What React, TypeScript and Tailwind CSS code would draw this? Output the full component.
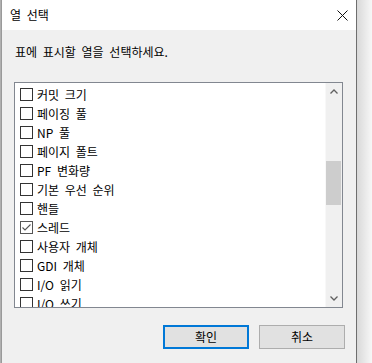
import React from "react";

const items: { label: string; checked: boolean }[] = [
  { label: "커밋 크기", checked: false },
  { label: "페이징 풀", checked: false },
  { label: "NP 풀", checked: false },
  { label: "페이지 폴트", checked: false },
  { label: "PF 변화량", checked: false },
  { label: "기본 우선 순위", checked: false },
  { label: "핸들", checked: false },
  { label: "스레드", checked: true },
  { label: "사용자 개체", checked: false },
  { label: "GDI 개체", checked: false },
  { label: "I/O 읽기", checked: false },
  { label: "I/O 쓰기", checked: false },
];

function Checkbox({ checked }: { checked: boolean }) {
  return (
    <div
      className={`w-[13px] h-[13px] shrink-0 bg-white border ${
        checked ? "border-[#555555]" : "border-[#333333]"
      } flex items-center justify-center`}
    >
      {checked && (
        <svg width="11" height="11" viewBox="0 0 11 11">
          <polyline
            points="1.5,5.5 4,8 9.5,2.5"
            fill="none"
            stroke="#555555"
            strokeWidth="1.1"
          />
        </svg>
      )}
    </div>
  );
}

export default function App() {
  const font = {
    fontFamily: '"Noto Sans CJK KR", "Noto Sans", sans-serif',
  };
  return (
    <div
      className="w-[372px] h-[363px] overflow-hidden flex bg-[#f0f0f0] text-[12px] text-black [word-spacing:3px]"
      style={font}
    >
      <div className="w-px h-full bg-[#b0b0b0]" />
      <div className="w-[356px] h-full flex flex-col border-l border-r border-l-[#9a9a9a] border-r-[#6e6e6e]">
        {/* title bar */}
        <div className="h-[30px] bg-white flex items-center justify-between pl-[8px] pr-[8px]">
          <span className="leading-[16px]">열 선택</span>
          <svg width="11" height="11" viewBox="0 0 11 11">
            <path d="M0.5 0.5 L10.5 10.5 M10.5 0.5 L0.5 10.5" stroke="#111" strokeWidth="1" />
          </svg>
        </div>
        {/* body */}
        <div className="flex-1 bg-[#f0f0f0] flex flex-col pl-[12px] pr-[11px]">
          <div className="mt-[14px] ml-px leading-[16px]">표에 표시할 열을 선택하세요.</div>
          <div className="mt-[22px] w-[329px] h-[226px] border border-[#828790] bg-white flex overflow-hidden">
            <div className="flex-1 pt-[2px] overflow-hidden">
              {items.map((it) => (
                <div key={it.label} className="h-[19px] flex items-center pl-[5px] gap-[4px]">
                  <Checkbox checked={it.checked} />
                  <span className="leading-[16px] whitespace-nowrap">{it.label}</span>
                </div>
              ))}
            </div>
            <div className="w-[17px] h-full bg-[#f0f0f0] flex flex-col border-l border-l-[#f8f8f8]">
              <div className="h-[17px] flex items-center justify-center">
                <svg width="8" height="5" viewBox="0 0 8 5">
                  <polyline points="0.5,4.5 4,1 7.5,4.5" fill="none" stroke="#606060" strokeWidth="1.3" />
                </svg>
              </div>
              <div className="flex-1 flex flex-col">
                <div className="mt-[61px] h-[44px] ml-0 mr-px bg-[#cdcdcd]" />
              </div>
              <div className="h-[17px] flex items-center justify-center">
                <svg width="8" height="5" viewBox="0 0 8 5">
                  <polyline points="0.5,0.5 4,4 7.5,0.5" fill="none" stroke="#606060" strokeWidth="1.3" />
                </svg>
              </div>
            </div>
          </div>
          <div className="mt-[17px] flex justify-end gap-[10px]">
            <button className="w-[86px] h-[24px] bg-[#e1e1e1] border-2 border-[#0078d7] flex items-center justify-center leading-[16px]">
              확인
            </button>
            <button className="w-[86px] h-[24px] bg-[#e1e1e1] border border-[#adadad] flex items-center justify-center leading-[16px]">
              취소
            </button>
          </div>
        </div>
      </div>
      <div className="flex-1 h-full bg-gradient-to-r from-[#d9d9d9] to-[#f7f7f7]" />
    </div>
  );
}
